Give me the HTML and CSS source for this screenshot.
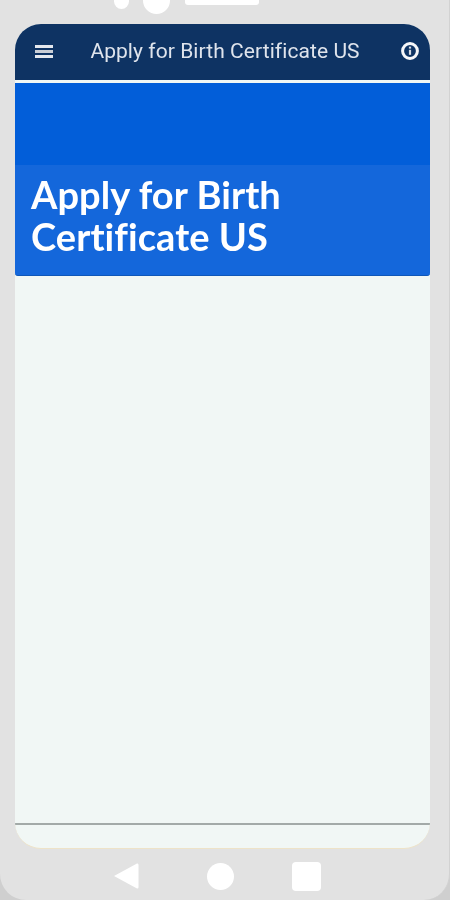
FILE: index.html
```html
<!DOCTYPE html>
<html lang="en">
<head>
  <meta charset="UTF-8" />
  <title>Apply for Birth Certificate US</title>
  <link rel="stylesheet" href="styles.css">
</head>
<body>
  <div class="phone">
    <div class="sensors">
      <span class="dot-small"></span>
      <span class="dot-big"></span>
      <span class="speaker"></span>
    </div>

    <div class="screen">
      <div class="topbar">
        <svg class="menu-icon" width="18" height="13" viewBox="0 0 18 13">
          <rect x="0" y="0" width="18" height="3" fill="#e4e8ee"/>
          <rect x="0" y="5" width="18" height="3" fill="#c9ced6"/>
          <rect x="0" y="10" width="18" height="3" fill="#e4e8ee"/>
        </svg>
        <div class="topbar-title">Apply for Birth Certificate US</div>
        <svg class="info-icon" width="18" height="18" viewBox="0 0 18 18">
          <circle cx="9" cy="9" r="7.4" fill="none" stroke="#f6f7f9" stroke-width="3"/>
          <rect x="7.900" y="7.800" width="2.200" height="5" fill="#d5dae2"/>
          <rect x="7.900" y="4.600" width="2.200" height="2" fill="#d5dae2"/>
        </svg>
      </div>

      <div class="hero">
        <div class="hero-top"></div>
        <h1 class="hero-title">Apply for Birth<br>Certificate US</h1>
      </div>

      <div class="content"></div>
      <div class="bottom-strip"></div>
    </div>

    <div class="navbar">
      <svg width="26" height="28" viewBox="0 0 26 28">
        <path d="M1 14 L24 1.5 Q25.500 1 25.500 3 V25 Q25.500 27 24 26.500 Z" fill="#fff"/>
      </svg>
      <span class="nav-circle"></span>
      <span class="nav-square"></span>
    </div>
  </div>
</body>
</html>
```

FILE: styles.css
```css
html, body {
  margin: 0;
  padding: 0;
  height: 100%;
}

body {
  font-family: 'Roboto', sans-serif;
  background-color: #cfcfcf;
  overflow: hidden;
}

.phone {
  box-sizing: border-box;
  width: 450px;
  height: 900px;
  padding: 0 19px 0 15px;
  background-color: #e2e2e2;
  border-right: 1px solid #d2d2d2;
  border-radius: 0 0 26px 26px;
  display: flex;
  flex-direction: column;
}

.sensors {
  height: 24px;
  display: flex;
  align-items: flex-start;
  padding-left: 99px;
  flex-shrink: 0;
}

.dot-small {
  width: 15px;
  height: 9px;
  background-color: #fff;
  border-radius: 0 0 8px 8px;
}

.dot-big {
  width: 27px;
  height: 14px;
  margin-left: 14px;
  background-color: #fff;
  border-radius: 0 0 14px 14px;
}

.speaker {
  width: 74px;
  height: 5px;
  margin-left: 15px;
  background-color: #fff;
  border-radius: 0 0 3px 3px;
}

.screen {
  height: 825px;
  background-color: #f1f7f5;
  border-radius: 26px;
  overflow: hidden;
  display: flex;
  flex-direction: column;
  border-bottom: 1px solid #eee3c8;
  box-sizing: border-box;
}

.topbar {
  height: 56px;
  flex-shrink: 0;
  background-color: #0e3363;
  display: flex;
  align-items: center;
  padding: 0 11px 2px 20px;
  box-sizing: border-box;
}

.menu-icon,
.info-icon,
.topbar-title,
.hero-title {
  filter: blur(0.4px);
}

.topbar-title {
  flex: 1;
  text-align: center;
  color: #dfe4ec;
  font-size: 21px;
  letter-spacing: 0.07px;
  font-variant-ligatures: none;
  padding-right: 4px;
}

.hero {
  margin-top: 3px;
  height: 193px;
  flex-shrink: 0;
  background-color: #1467db;
  border-radius: 3px;
  border-bottom: 1px solid #0f57b8;
  box-sizing: border-box;
  display: flex;
  flex-direction: column;
}

.hero-top {
  height: 82px;
  background-color: #025ed9;
}

.hero-title {
  margin: 8px 0 0 16px;
  color: #fff;
  font-family: 'Lato', sans-serif;
  font-size: 38px;
  font-weight: 700;
  letter-spacing: 0.06px;
  font-variant-ligatures: none;
  line-height: 42px;
}

.content {
  flex: 1;
  border-bottom: 2px solid #a3aaa8;
}

.bottom-strip {
  height: 23px;
  flex-shrink: 0;
}

.navbar {
  flex: 1;
  display: flex;
  align-items: center;
  padding: 3px 0 0 98px;
}

.nav-circle {
  width: 27px;
  height: 27px;
  margin-left: 68px;
  background-color: #fff;
  border-radius: 50%;
}

.nav-square {
  width: 29px;
  height: 29px;
  margin-left: 58px;
  background-color: #fff;
  border-radius: 4px;
}
```
